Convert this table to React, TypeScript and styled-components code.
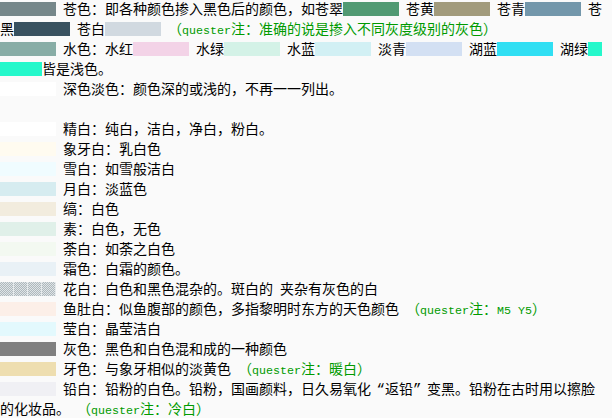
import React from "react";
import styled, { createGlobalStyle } from "styled-components";

const GlobalStyle = createGlobalStyle`
  html, body {
    margin: 0;
    padding: 0;
    background: #fafafa;
  }
`;

/* Liberation Mono comes first so that its metrics set the baseline of each
   20px line (CJK glyphs fall back to Noto Sans CJK SC), like SimSun does. */
const Doc = styled.div`
  width: 605px;
  font-family: "Liberation Mono", "Noto Sans CJK SC", monospace;
  font-size: 14px;
  line-height: 20px;
  color: #000;
  word-spacing: -1.4px;
`;

const Para = styled.p`
  margin: 0;
`;

const Blank = styled.div`
  height: 20px;
`;

const Swatch = styled.span<{ $c: string; $w?: number; $pattern?: boolean }>`
  display: inline-block;
  width: ${(p) => p.$w ?? 56}px;
  height: 14px;
  margin-top: 2px;
  vertical-align: top;
  background-color: ${(p) => p.$c};
  ${(p) =>
    p.$pattern
      ? `background-image: linear-gradient(90deg, transparent 13px, #e6eaec 13px),
           repeating-conic-gradient(#aeb8bd 0 25%, #dfe4e6 0 50%);
         background-size: 14px 14px, 2px 2px;`
      : ""}
`;

const Note = styled.span`
  color: #009a00;
`;

const Latin = styled.span`
  font-family: "Liberation Mono", monospace;
  font-size: 11.67px;
  line-height: 1;
  word-spacing: normal;
`;

const Quote = styled.span<{ $side: "open" | "close" }>`
  display: inline-block;
  width: 14px;
  text-align: ${(p) => (p.$side === "open" ? "right" : "left")};
`;

const QNote = ({ children }: { children: React.ReactNode }) => (
  <Note>
    （<Latin>quester</Latin>注：{children}）
  </Note>
);

type Row = { c: string; t: string; pattern?: boolean; note?: React.ReactNode };

const rows: Row[] = [
  { c: "#ffffff", t: "精白：纯白，洁白，净白，粉白。" },
  { c: "#fffbf0", t: "象牙白：乳白色" },
  { c: "#f0fcff", t: "雪白：如雪般洁白" },
  { c: "#d6ecf0", t: "月白：淡蓝色" },
  { c: "#f2ecde", t: "缟：白色" },
  { c: "#e0f0e9", t: "素：白色，无色" },
  { c: "#f3f9f1", t: "荼白：如荼之白色" },
  { c: "#e9f1f6", t: "霜色：白霜的颜色。" },
  { c: "#c2ccd0", pattern: true, t: "花白：白色和黑色混杂的。斑白的 夹杂有灰色的白" },
  {
    c: "#fcefe8",
    t: "鱼肚白：似鱼腹部的颜色，多指黎明时东方的天色颜色",
    note: <Latin>M5 Y5</Latin>,
  },
  { c: "#e3f9fd", t: "莹白：晶莹洁白" },
  { c: "#808080", t: "灰色：黑色和白色混和成的一种颜色" },
  { c: "#eedeb0", t: "牙色：与象牙相似的淡黄色", note: "暖白" },
];

export default function App() {
  return (
    <>
      <GlobalStyle />
      <Doc>
        <Para>
          <Swatch $c="#75878a" /> 苍色：即各种颜色掺入黑色后的颜色，如苍翠
          <Swatch $c="#519a73" /> 苍黄<Swatch $c="#a29b7c" /> 苍青
          <Swatch $c="#7397ab" /> 苍黑<Swatch $c="#395260" /> 苍白
          <Swatch $c="#d1d9e0" /> <QNote>准确的说是掺入不同灰度级别的灰色</QNote>
        </Para>
        <Para>
          <Swatch $c="#88ada6" /> 水色：水红<Swatch $c="#f3d3e7" /> 水绿
          <Swatch $c="#d4f2e7" /> 水蓝<Swatch $c="#d2f0f4" /> 淡青
          <Swatch $c="#d3e0f3" /> 湖蓝<Swatch $c="#30dff3" /> 湖绿
          <Swatch $c="#25f8cb" $w={14} />
          <Swatch $c="#25f8cb" $w={42} />
          皆是浅色。
        </Para>
        <Para>
          <Swatch $c="#ffffff" /> 深色淡色：颜色深的或浅的，不再一一列出。
        </Para>
        <Blank />
        {rows.map((r) => (
          <Para key={r.t}>
            <Swatch $c={r.c} $pattern={r.pattern} /> {r.t}
            {r.note ? (
              <>
                {" "}
                <QNote>{r.note}</QNote>
              </>
            ) : null}
          </Para>
        ))}
        <Para>
          <Swatch $c="#f0f0f4" /> 铅白：铅粉的白色。铅粉，国画颜料，日久易氧化
          <Quote $side="open">“</Quote>返铅<Quote $side="close">”</Quote>
          变黑。铅粉在古时用以擦脸的化妆品。 <QNote>冷白</QNote>
        </Para>
      </Doc>
    </>
  );
}
